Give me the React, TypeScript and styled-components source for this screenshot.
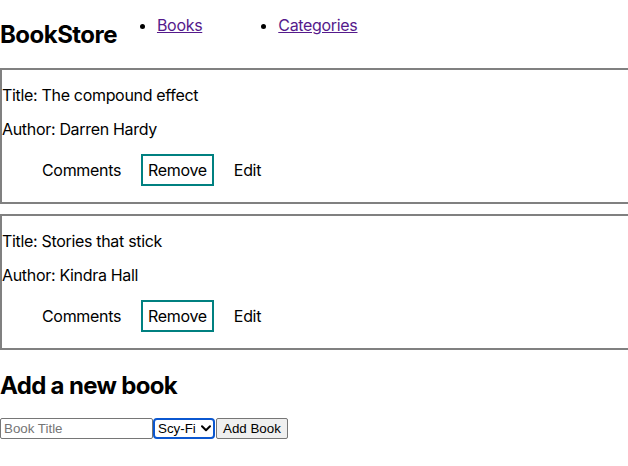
import React from "react";
import styled, { createGlobalStyle } from "styled-components";

const Global = createGlobalStyle`
  html, body { margin: 0; padding: 0; background: #fff; }
  body {
    font-family: Inter, "Noto Sans", sans-serif;
    font-size: 16px;
    line-height: 18px;
    letter-spacing: -0.02em;
    color: #000;
    overflow-x: hidden;
  }
`;

const Header = styled.header`
  display: flex;
  align-items: flex-start;
`;

const Logo = styled.h1`
  font-size: 24px;
  line-height: 28px;
  font-weight: 700;
  letter-spacing: -0.022em;
  margin: 21px 0 19px;
`;

const Nav = styled.ul`
  display: flex;
  gap: 76px;
  margin: 16px 0;
  padding-left: 40px;
  list-style: disc;
`;

const NavItem = styled.li`
  display: list-item;
`;

const NavLink = styled.a`
  color: #551a8b;
  text-decoration: underline;
`;

const Card = styled.section`
  width: 100%;
  border: 2px solid #808080;
  margin: 0 0 10px;
`;

const Line = styled.p`
  margin: 16px 0;
`;

const Actions = styled.div`
  display: flex;
  gap: 13px;
  padding-left: 33px;
  margin: 16px 0;
`;

const ActionButton = styled.button<{ $outlined?: boolean }>`
  font: inherit;
  letter-spacing: inherit;
  line-height: 18px;
  color: #000;
  background: transparent;
  padding: 5px;
  border: 2px solid ${(p) => (p.$outlined ? "#008080" : "transparent")};
  cursor: pointer;
`;

const SectionTitle = styled.h2`
  font-size: 24px;
  line-height: 28px;
  font-weight: 700;
  letter-spacing: -0.028em;
  margin: 22px 0 18px;
`;

const Form = styled.form`
  display: flex;
  align-items: stretch;
  letter-spacing: normal;
`;

const TitleInput = styled.input`
  font: 13.333px "Liberation Sans", Arial, sans-serif;
  width: 153px;
  box-sizing: border-box;
  height: 21px;
  padding: 1px 3px;
  border: 1px solid #767676;
  border-radius: 2px;
  &::placeholder { color: #757575; }
`;

const SelectWrap = styled.span`
  position: relative;
  display: inline-flex;
`;

const CategorySelect = styled.select`
  appearance: none;
  -webkit-appearance: none;
  font: 13.333px "Liberation Sans", Arial, sans-serif;
  width: 62px;
  height: 21px;
  box-sizing: border-box;
  border: 2px solid #0b57d0;
  border-radius: 4px;
  padding: 0 16px 0 3px;
  background: #fff;
  color: #000;
  outline: none;
`;

const Chevron = styled.svg`
  position: absolute;
  right: 4px;
  top: 7px;
  width: 10px;
  height: 7px;
  pointer-events: none;
`;

const SubmitButton = styled.button`
  font: 13.333px "Liberation Sans", Arial, sans-serif;
  height: 21px;
  box-sizing: border-box;
  padding: 1px 6px;
  margin-left: 1px;
  background: #efefef;
  border: 1px solid #767676;
  border-radius: 2px;
  color: #000;
`;

const books = [
  { title: "The compound effect", author: "Darren Hardy" },
  { title: "Stories that stick", author: "Kindra Hall" },
];

export default function App() {
  return (
    <>
      <Global />
      <Header>
        <Logo>BookStore</Logo>
        <Nav>
          <NavItem>
            <NavLink href="#books">Books</NavLink>
          </NavItem>
          <NavItem>
            <NavLink href="#categories">Categories</NavLink>
          </NavItem>
        </Nav>
      </Header>
      <main>
        {books.map((b) => (
          <Card key={b.title}>
            <Line>Title: {b.title}</Line>
            <Line>Author: {b.author}</Line>
            <Actions>
              <ActionButton type="button">Comments</ActionButton>
              <ActionButton type="button" $outlined>
                Remove
              </ActionButton>
              <ActionButton type="button">Edit</ActionButton>
            </Actions>
          </Card>
        ))}
        <SectionTitle>Add a new book</SectionTitle>
        <Form onSubmit={(e) => e.preventDefault()}>
          <TitleInput placeholder="Book Title" />
          <SelectWrap>
            <CategorySelect defaultValue="Scy-Fi">
              <option>Scy-Fi</option>
              <option>Fiction</option>
              <option>Biography</option>
            </CategorySelect>
            <Chevron viewBox="0 0 10 7" aria-hidden="true">
              <path d="M1 1.2 L5 5.2 L9 1.2" fill="none" stroke="#000" strokeWidth="2" strokeLinecap="round" strokeLinejoin="round" />
            </Chevron>
          </SelectWrap>
          <SubmitButton type="submit">Add Book</SubmitButton>
        </Form>
      </main>
    </>
  );
}
